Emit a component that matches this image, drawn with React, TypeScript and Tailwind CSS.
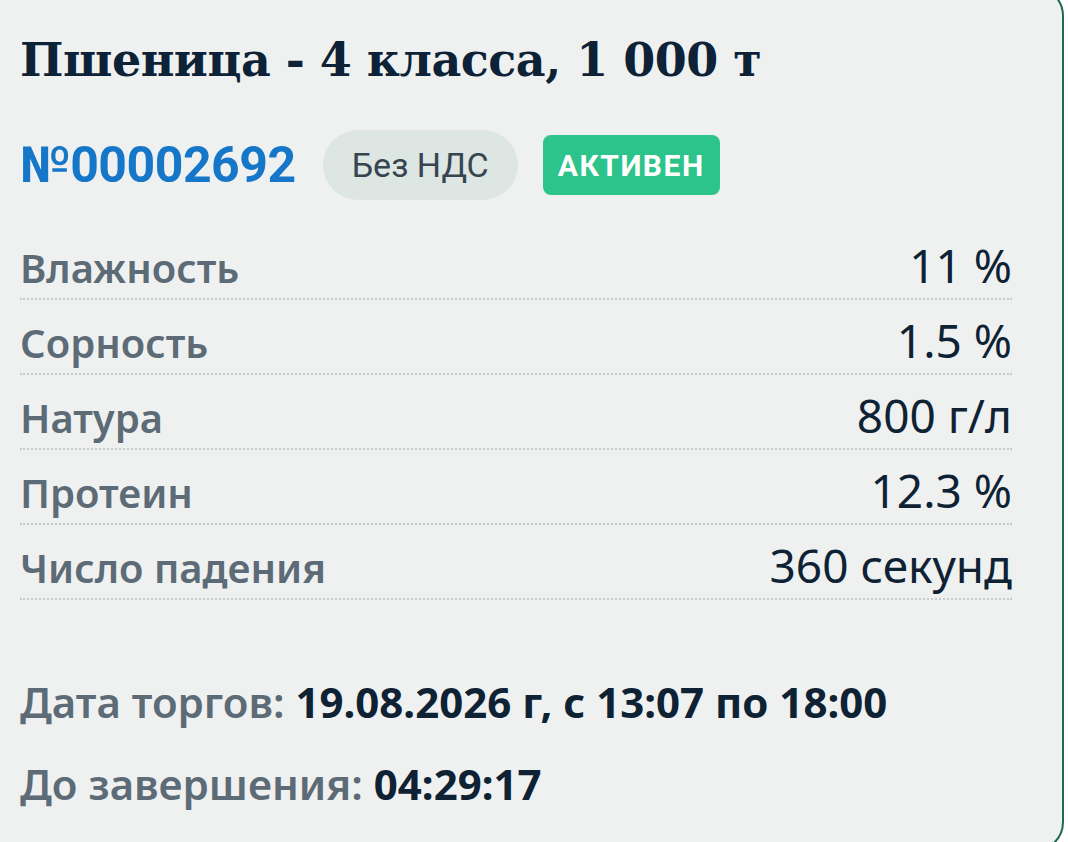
import React from 'react';

const rows = [
  { label: 'Влажность', value: '11 %' },
  { label: 'Сорность', value: '1.5 %' },
  { label: 'Натура', value: '800 г/л' },
  { label: 'Протеин', value: '12.3 %' },
  { label: 'Число падения', value: '360 секунд' },
];

export default function App() {
  return (
    <div className="h-[842px] w-[1068px] overflow-hidden bg-white">
      <div className="-ml-[24px] -mt-[14px] h-[866px] w-[1088px] rounded-[30px] border-2 border-[#1d6b50] bg-[#eff1f1] pl-[42px] pr-[50px] pt-[42px]">
        <h1 className="font-['DejaVu_Serif',serif] text-[46px] font-bold leading-[60px] tracking-[-0.5px] text-[#0d2236]">
          Пшеница - 4 класса, 1 000 т
        </h1>

        <div className="mt-[40px] flex items-center">
          <span className="font-['Roboto',sans-serif] text-[50px] font-bold leading-none tracking-[-0.5px] text-[#1677c9]">
            №00002692
          </span>
          <span className="ml-[27px] flex h-[70px] items-center rounded-full bg-[#dde6e2] px-[29px] font-['Roboto',sans-serif] text-[34px] text-[#36454f]">
            Без НДС
          </span>
          <span className="ml-[25px] flex h-[60px] items-center rounded-[8px] bg-[#2cc48b] px-[15px] font-['Roboto',sans-serif] text-[30px] font-bold tracking-[1.5px] text-white">
            АКТИВЕН
          </span>
        </div>

        <div className="mt-[25px] flex flex-col">
          {rows.map((r) => (
            <div
              key={r.label}
              className="flex h-[75px] items-end justify-between border-b-2 border-dotted border-[#c6cbcd] pb-[10px] font-['Noto_Sans',sans-serif]"
            >
              <span className="text-[40px] font-semibold leading-none text-[#5c6b76]">{r.label}</span>
              <span className="text-[46px] leading-none text-[#0e2233]">{r.value}</span>
            </div>
          ))}
        </div>

        <div className="mt-[81px] font-['Noto_Sans',sans-serif] text-[42px] leading-none">
          <div>
            <span className="font-semibold text-[#5c6b76]">Дата торгов: </span>
            <span className="font-bold text-[#0e2233]">19.08.2026 г, с 13:07 по 18:00</span>
          </div>
          <div className="mt-[40px]">
            <span className="font-semibold text-[#5c6b76]">До завершения: </span>
            <span className="font-bold text-[#0e2233]">04:29:17</span>
          </div>
        </div>
      </div>
    </div>
  );
}
